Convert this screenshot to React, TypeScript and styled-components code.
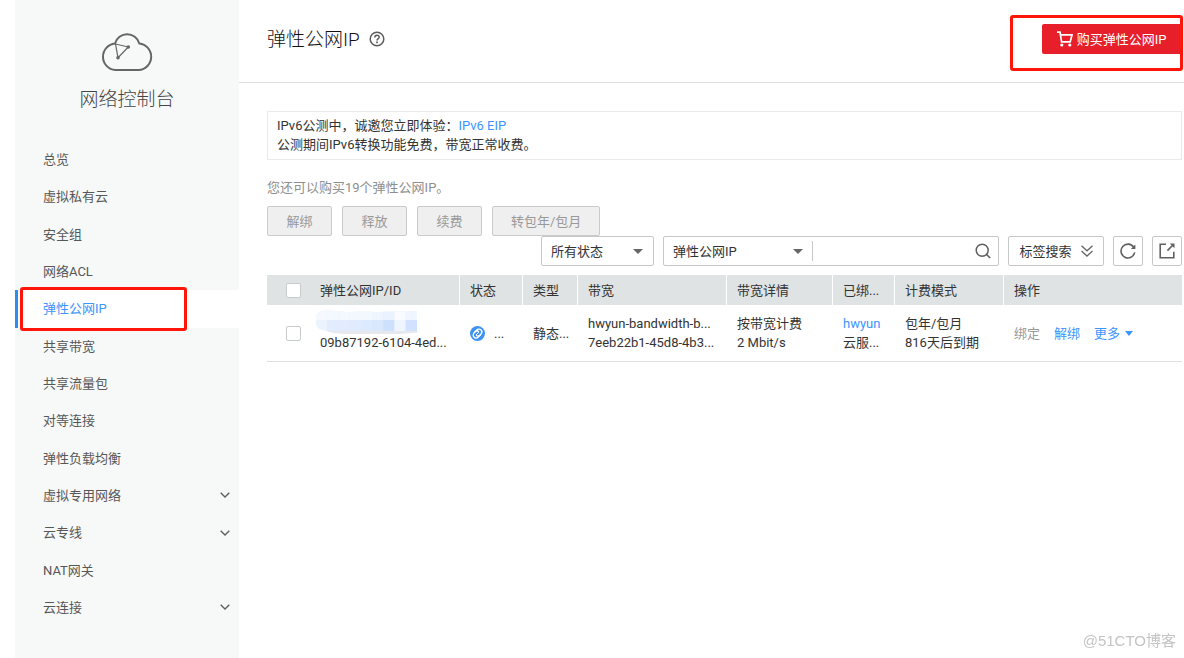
import React from 'react';
import styled, { createGlobalStyle } from 'styled-components';

const GlobalStyle = createGlobalStyle`
  *, *::before, *::after { box-sizing: border-box; }
  body {
    margin: 0;
    background: #fff;
    color: #333;
    font: 13px/19px Roboto, "Noto Sans CJK SC", sans-serif;
  }
  button, input, select { font: inherit; color: inherit; margin: 0; }
  a { text-decoration: none; }
  svg { display: block; flex: none; }
`;

const Page = styled.div`
  display: flex;
  min-height: 100vh;
  padding-left: 15px;
`;

const Sidebar = styled.aside`
  flex: none;
  width: 224px;
  background: #f7f9f8;
`;

const Brand = styled.div`
  display: flex;
  flex-direction: column;
  align-items: center;
  gap: 14px;
  height: 141px;
  padding-top: 33px;
  color: #444;
  font-size: 19px;
  line-height: 28px;
  font-weight: 300;
`;

const NavList = styled.ul`
  display: flex;
  flex-direction: column;
  height: 485px;
  margin: 0;
  padding: 0;
  list-style: none;
`;

const NavItem = styled.li`
  position: relative;
  flex: 1;
  display: flex;
`;

const NavLink = styled.a<{ $active?: boolean }>`
  flex: 1;
  display: flex;
  align-items: center;
  justify-content: space-between;
  padding: 0 9px 0 25px;
  border-left: 3px solid ${p => (p.$active ? '#2d8cf0' : 'transparent')};
  background: ${p => (p.$active ? '#fff' : 'transparent')};
  color: ${p => (p.$active ? '#3c94ff' : '#575757')};
`;

const NavMark = styled.span`
  position: absolute;
  inset: -3px 52px -3px 5px;
  border: 3px solid #ff1509;
  border-radius: 3px;
  pointer-events: none;
`;

const Main = styled.main`
  flex: 1;
  min-width: 0;
`;

const Header = styled.header`
  display: flex;
  justify-content: space-between;
  align-items: flex-start;
  height: 83px;
  padding: 24px 2px 0 28px;
  border-bottom: 1px solid #dfe1e1;
`;

const TitleGroup = styled.div`
  display: flex;
  align-items: center;
  gap: 9px;
  height: 30px;
`;

const Title = styled.h1`
  margin: 0;
  padding-top: 2px;
  font-size: 19px;
  line-height: 28px;
  font-weight: 300;
  color: #111;
`;

const BuyWrap = styled.div`
  position: relative;
`;

const BuyMark = styled.span`
  position: absolute;
  inset: -9px -1px -17px -32px;
  border: 3px solid #ff1509;
  border-radius: 3px;
  pointer-events: none;
`;

const BuyButton = styled.button`
  display: flex;
  align-items: center;
  justify-content: center;
  gap: 4px;
  width: 140px;
  height: 30px;
  padding: 0 1px 0 0;
  border: 0;
  border-radius: 2px;
  background: #e71f2b;
  color: #fff;
`;

const Content = styled.div`
  padding: 28px 2px 0 28px;
`;

const Notice = styled.section`
  padding: 4px 9px 5px;
  border: 1px solid #e9ebeb;
`;

const Link = styled.a`
  color: #3c94ff;
`;

const Quota = styled.p`
  margin: 18px 0 9px;
  color: #8e8e8e;
`;

const Row = styled.div<{ $end?: boolean }>`
  display: flex;
  justify-content: ${p => (p.$end ? 'flex-end' : 'flex-start')};
  gap: 9px;
`;

const Actions = styled(Row)`
  gap: 10px;
`;

const ActionButton = styled.button`
  min-width: 65px;
  height: 30px;
  padding: 0 18px;
  border: 1px solid #c9caca;
  border-radius: 2px;
  background: #efefef;
  color: #999;
`;

const OutlineButton = styled.button<{ $square?: boolean }>`
  display: flex;
  align-items: center;
  justify-content: center;
  gap: 9px;
  flex: none;
  width: ${p => (p.$square ? '30px' : '96px')};
  height: 30px;
  padding: 0;
  border: 1px solid #c6c8c8;
  border-radius: 2px;
  background: #fff;
`;

const Field = styled.div<{ $width: number }>`
  display: flex;
  align-items: center;
  width: ${p => p.$width}px;
  height: 30px;
  border: 1px solid #c6c8c8;
  border-radius: 2px;
  background: #fff;
`;

const SelectBox = styled.label<{ $divided?: boolean }>`
  display: grid;
  align-items: center;
  flex: ${p => (p.$divided ? '0 0 149px' : '1')};
  height: 20px;
  padding: 0 ${p => (p.$divided ? '9px' : '10px')} 0 9px;
  border-right: ${p => (p.$divided ? '1px solid #c6c8c8' : '0')};
  select, svg { grid-area: 1 / 1; }
  svg { justify-self: end; pointer-events: none; }
`;

const Select = styled.select`
  width: 100%;
  padding: 0;
  border: 0;
  outline: 0;
  appearance: none;
  background: transparent;
`;

const SearchInput = styled.input`
  flex: 1;
  min-width: 0;
  height: 26px;
  padding: 0 9px;
  border: 0;
  outline: 0;
  background: transparent;
`;

const SearchButton = styled.button`
  padding: 0 7px;
  border: 0;
  background: transparent;
`;

const Table = styled.table`
  width: 100%;
  margin-top: 9px;
  border-collapse: separate;
  border-spacing: 0;
  table-layout: fixed;
`;

const HeadCell = styled.th<{ $plain?: boolean }>`
  height: 30px;
  padding: 0 0 0 10px;
  border-right: ${p => (p.$plain ? '0' : '1px solid #fff')};
  background: #dfe3e4;
  font-weight: 400;
  text-align: left;
  white-space: nowrap;
`;

const Cell = styled.td`
  height: 57px;
  padding: 0 0 0 10px;
  border-bottom: 1px solid #dfe1e1;
  white-space: nowrap;
`;

const Line = styled.div`
  height: 19px;
`;

const Check = styled.input`
  display: block;
  appearance: none;
  width: 15px;
  height: 15px;
  margin: 0 0 0 9px;
  border: 1px solid #c9cccc;
  border-radius: 2px;
  background: #fff;
`;

const Status = styled.div`
  display: flex;
  align-items: center;
  gap: 9px;
`;

const Ops = styled.div`
  display: flex;
  align-items: center;
  gap: 14px;
`;

const DisabledOp = styled.span`
  color: #999;
`;

const MoreLink = styled(Link)`
  display: flex;
  align-items: center;
  gap: 5px;
`;

const Masked = styled.svg`
  margin: -4px 0 -1px -5px;
`;

const Watermark = styled.span`
  position: fixed;
  right: 8px;
  bottom: 7px;
  color: #c4c4c4;
  font: 15px/20px "Liberation Sans", "Noto Sans CJK SC", sans-serif;
`;

const CloudLogo = () => (
  <svg width="52" height="39" viewBox="0 0 52 39" fill="none" stroke="#666" strokeWidth="2">
    <path d="M14.3 37H37.7A13.3 13.3 0 0 0 38.3 10.5A12.6 12.6 0 0 0 14 10.5A13.3 13.3 0 0 0 14.3 37Z" strokeLinejoin="round" />
    <path d="M14.5 11L27.3 14L17 24.7Z" strokeWidth="1.2" />
    <circle cx="27.3" cy="14" r="1.8" fill="#666" stroke="none" />
    <circle cx="17" cy="24.7" r="1.8" fill="#666" stroke="none" />
  </svg>
);

const HelpIcon = () => (
  <svg width="16" height="16" viewBox="0 0 16 16" fill="none" stroke="#5c5c5c" strokeWidth="1.5">
    <circle cx="8" cy="8" r="6.8" />
    <path d="M5.8 6.4C5.8 3.5 10.2 3.5 10.2 6.2C10.2 7.7 8 7.7 8 9.6" />
    <path d="M8 10.6V12.2" strokeWidth="1.7" />
  </svg>
);

const CartIcon = () => (
  <svg width="16" height="16" viewBox="0 0 16 16" fill="none" stroke="#fff" strokeWidth="1.7">
    <path d="M0 1.2H3L4.6 10.8H13.2L15 3.9H3.6" />
    <circle cx="4.8" cy="14" r="1.6" fill="#fff" stroke="none" />
    <circle cx="12.8" cy="14" r="1.6" fill="#fff" stroke="none" />
  </svg>
);

const ChevronDown = () => (
  <svg width="10" height="6" viewBox="0 0 10 6" fill="none" stroke="#5f5f5f" strokeWidth="1.4">
    <path d="M0.7 0.7L5 4.9L9.3 0.7" />
  </svg>
);

const Caret = ({ width = 10, height = 5, color = '#666' }) => (
  <svg width={width} height={height} viewBox="0 0 10 5" preserveAspectRatio="none">
    <path d="M0 0H10L5 5Z" fill={color} />
  </svg>
);

const SearchIcon = () => (
  <svg width="16" height="16" viewBox="0 0 16 16" fill="none" stroke="#606060" strokeWidth="1.5">
    <circle cx="7.2" cy="7.2" r="6" />
    <path d="M11.4 11.4L15.3 15" />
  </svg>
);

const DoubleChevron = () => (
  <svg width="12" height="12" viewBox="0 0 12 12" fill="none" stroke="#666" strokeWidth="1.3">
    <path d="M0.5 0.8L6 5.8L11.5 0.8M0.5 6L6 11L11.5 6" />
  </svg>
);

const RefreshIcon = () => (
  <svg width="16" height="16" viewBox="0 0 16 16" fill="none" stroke="#606060" strokeWidth="1.6">
    <path d="M14.7 9.4A6.9 6.9 0 1 1 13.7 4.2" />
    <path d="M15.4 1.4V5.9H10.9Z" fill="#606060" stroke="none" />
  </svg>
);

const ExportIcon = () => (
  <svg width="16" height="16" viewBox="0 0 16 16" fill="none" stroke="#606060" strokeWidth="1.6">
    <path d="M7 1.2H1.2V14.8H14.8V8.8" />
    <path d="M8.4 7.6L14 2" />
    <path d="M10.8 0.5H15.5V5.2Z" fill="#606060" stroke="none" />
  </svg>
);

const BoundIcon = () => (
  <svg width="15" height="15" viewBox="0 0 15 15" fill="none" stroke="#fff" strokeWidth="1.3" strokeLinecap="round">
    <circle cx="7.5" cy="7.5" r="7.5" fill="#3d93f5" stroke="none" />
    <path d="M4.6 6L6.7 4A2.9 2.9 0 0 1 11 8L9.3 9.6A2 2 0 0 1 6.5 9.4" />
    <path d="M10.4 9L8.3 11A2.9 2.9 0 0 1 4 7L5.7 5.4A2 2 0 0 1 8.5 5.6" />
    <path d="M6.4 8.5L8.6 6.5" strokeWidth="1" />
  </svg>
);

const MASK_TOP = ['#f5f9ff', '#f4f9ff', '#f4f9ff', '#f3f8ff', '#f3f8ff', '#f0f6ff', '#eaf2ff', '#f8fbff', '#f0f6ff'];
const MASK_BOTTOM = ['#ebf3ff', '#e2ecfe', '#e2ecfe', '#e1ebfe', '#dde9fe', '#dae8fe', '#cde0fe', '#eff5ff', '#d0e2ff'];

const MaskedAddress = () => (
  <Masked width="104" height="24" viewBox="0 0 104 24" role="img" aria-label="IP">
    <defs>
      <clipPath id="brush">
        <path d="M1 6C2 0 12 0 22 1C32 3 45 1 60 2L102 1V21L104 22C95 24 82 24 70 24H35C24 24 15 23 9 20C3 19 1 16 1 12Z" />
      </clipPath>
    </defs>
    <g clipPath="url(#brush)">
      <rect width="104" height="24" fill="#e6e8ec" />
      {MASK_TOP.map((c, i) => <rect key={i} x={i * 11.2 + 1} y="0" width="11.4" height="10" fill={c} />)}
      {MASK_BOTTOM.map((c, i) => <rect key={i} x={i * 11.2 + 1} y="10" width="11.4" height="11" fill={c} />)}
    </g>
  </Masked>
);

const NAV = [
  { label: '总览' },
  { label: '虚拟私有云' },
  { label: '安全组' },
  { label: '网络ACL' },
  { label: '弹性公网IP', active: true },
  { label: '共享带宽' },
  { label: '共享流量包' },
  { label: '对等连接' },
  { label: '弹性负载均衡' },
  { label: '虚拟专用网络', group: true },
  { label: '云专线', group: true },
  { label: 'NAT网关' },
  { label: '云连接', group: true },
];

const COLUMNS = ['弹性公网IP/ID', '状态', '类型', '带宽', '带宽详情', '已绑...', '计费模式', '操作'];
const WIDTHS = [43, 150, 63, 55, 149, 106, 62, 109];

export default function App() {
  return (
    <>
      <GlobalStyle />
      <Page>
        <Sidebar>
          <Brand>
            <CloudLogo />
            <span>网络控制台</span>
          </Brand>
          <nav>
            <NavList>
              {NAV.map(item => (
                <NavItem key={item.label}>
                  <NavLink href="#" $active={item.active}>
                    {item.label}
                    {item.group && <ChevronDown />}
                  </NavLink>
                  {item.active && <NavMark />}
                </NavItem>
              ))}
            </NavList>
          </nav>
        </Sidebar>
        <Main>
          <Header>
            <TitleGroup>
              <Title>弹性公网IP</Title>
              <HelpIcon />
            </TitleGroup>
            <BuyWrap>
              <BuyButton type="button"><CartIcon />购买弹性公网IP</BuyButton>
              <BuyMark />
            </BuyWrap>
          </Header>
          <Content>
            <Notice>
              <div>IPv6公测中，诚邀您立即体验：<Link href="#">IPv6 EIP</Link></div>
              <div>公测期间IPv6转换功能免费，带宽正常收费。</div>
            </Notice>
            <Quota>您还可以购买19个弹性公网IP。</Quota>
            <Actions>
              <ActionButton type="button">解绑</ActionButton>
              <ActionButton type="button">释放</ActionButton>
              <ActionButton type="button">续费</ActionButton>
              <ActionButton type="button">转包年/包月</ActionButton>
            </Actions>
            <Row $end>
              <Field $width={113}>
                <SelectBox>
                  <Select aria-label="状态"><option>所有状态</option></Select>
                  <Caret />
                </SelectBox>
              </Field>
              <Field $width={336}>
                <SelectBox $divided>
                  <Select aria-label="搜索字段"><option>弹性公网IP</option></Select>
                  <Caret />
                </SelectBox>
                <SearchInput type="text" aria-label="搜索" />
                <SearchButton type="button" aria-label="搜索"><SearchIcon /></SearchButton>
              </Field>
              <OutlineButton type="button">标签搜索<DoubleChevron /></OutlineButton>
              <OutlineButton type="button" $square aria-label="刷新"><RefreshIcon /></OutlineButton>
              <OutlineButton type="button" $square aria-label="导出"><ExportIcon /></OutlineButton>
            </Row>
            <Table>
              <colgroup>
                {WIDTHS.map((w, i) => <col key={i} width={w} />)}
                <col />
              </colgroup>
              <thead>
                <tr>
                  <HeadCell $plain><Check type="checkbox" aria-label="全选" /></HeadCell>
                  {COLUMNS.map((c, i) => (
                    <HeadCell key={c} $plain={i === COLUMNS.length - 1}>{c}</HeadCell>
                  ))}
                </tr>
              </thead>
              <tbody>
                <tr>
                  <Cell><Check type="checkbox" aria-label="选择" /></Cell>
                  <Cell>
                    <MaskedAddress />
                    <Line>09b87192-6104-4ed...</Line>
                  </Cell>
                  <Cell><Status><BoundIcon />...</Status></Cell>
                  <Cell>静态...</Cell>
                  <Cell>
                    <Line>hwyun-bandwidth-b...</Line>
                    <Line>7eeb22b1-45d8-4b3...</Line>
                  </Cell>
                  <Cell>
                    <Line>按带宽计费</Line>
                    <Line>2 Mbit/s</Line>
                  </Cell>
                  <Cell>
                    <Line><Link href="#">hwyun</Link></Line>
                    <Line>云服...</Line>
                  </Cell>
                  <Cell>
                    <Line>包年/包月</Line>
                    <Line>816天后到期</Line>
                  </Cell>
                  <Cell>
                    <Ops>
                      <DisabledOp>绑定</DisabledOp>
                      <Link href="#">解绑</Link>
                      <MoreLink href="#">更多<Caret width={8} color="#3c94ff" /></MoreLink>
                    </Ops>
                  </Cell>
                </tr>
              </tbody>
            </Table>
          </Content>
        </Main>
      </Page>
      <Watermark>@51CTO博客</Watermark>
    </>
  );
}
